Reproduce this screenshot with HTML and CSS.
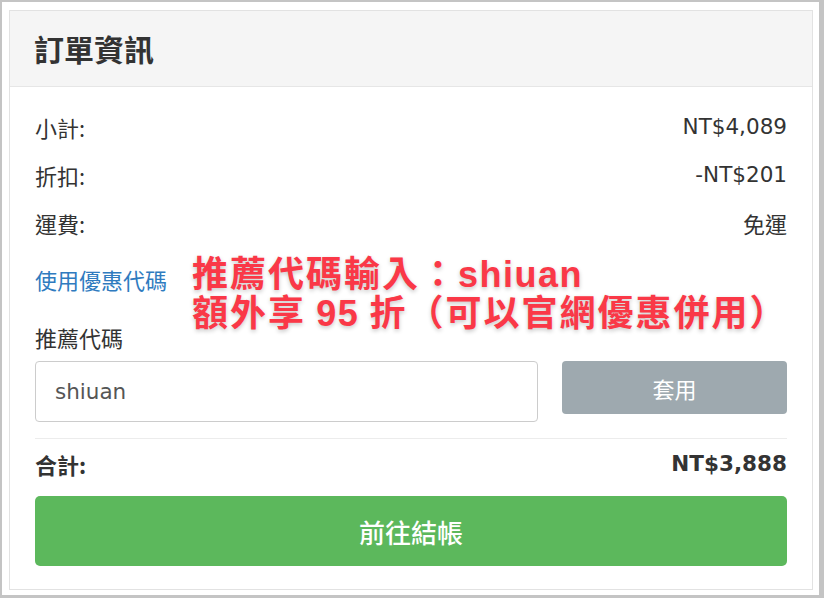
FILE: index.html
```html
<!DOCTYPE html>
<html lang="zh-Hant">
<head>
<meta charset="utf-8">
<title>訂單資訊</title>
<link rel="stylesheet" href="styles.css">
</head>
<body>
<div class="frame">
  <div class="card">
    <div class="card-header">訂單資訊</div>
    <div class="card-body">
      <div class="row"><span>小計:</span><span class="num">NT$4,089</span></div>
      <div class="row"><span>折扣:</span><span class="num">-NT$201</span></div>
      <div class="row"><span>運費:</span><span>免運</span></div>
      <a class="coupon-link" href="#">使用優惠代碼</a>
      <div class="label">推薦代碼</div>
      <div class="code-group">
        <div class="code-input">shiuan</div>
        <button class="apply-btn" type="button">套用</button>
      </div>
      <div class="divider"></div>
      <div class="row total"><span>合計:</span><span class="num">NT$3,888</span></div>
      <button class="checkout-btn" type="button">前往結帳</button>
      <div class="promo">
        <div class="promo-line">推薦代碼輸入：<span class="latin">shiuan</span></div>
        <div class="promo-line">額外享 <span class="latin">95</span> 折（可以官網優惠併用）</div>
      </div>
    </div>
  </div>
</div>
</body>
</html>
```

FILE: styles.css
```css
html, body {
  margin: 0;
  padding: 0;
}
body {
  background: #c4c4c4;
  width: 824px;
  height: 598px;
  overflow: hidden;
  font-family: "DejaVu Sans", "Noto Sans CJK TC", sans-serif;
  color: #333;
}
.frame {
  margin: 2px 5px 3px 2px;
  height: 580px;
  padding: 8px 6px 5px 7px;
  background: #fff;
}
.card {
  border: 1px solid #e2e2e2;
  height: 578px;
  background: #fff;
}
.card-header {
  height: 75px;
  line-height: 74px;
  padding-left: 24px;
  background: #f5f5f5;
  border-bottom: 1px solid #e6e6e6;
  font-family: "Noto Sans CJK TC", sans-serif;
  font-size: 30px;
  font-weight: 700;
  color: #333;
}
.card-body {
  position: relative;
  padding: 23px 25px 0 25px;
  display: flex;
  flex-direction: column;
  font-size: 22px;
}
.row {
  display: flex;
  justify-content: space-between;
  align-items: center;
  height: 34px;
  line-height: 34px;
  margin-bottom: 14px;
}
.row span {
  font-family: "Noto Sans CJK TC", sans-serif;
}
.row .num {
  font-family: "DejaVu Sans", sans-serif;
  font-size: 21.5px;
}
.coupon-link {
  font-family: "Noto Sans CJK TC", sans-serif;
  color: #2f7bbf;
  text-decoration: none;
  line-height: 34px;
  margin-top: 8px;
  align-self: flex-start;
}
.label {
  font-family: "Noto Sans CJK TC", sans-serif;
  line-height: 34px;
  margin-top: 24px;
}
.code-group {
  display: flex;
  align-items: flex-start;
  gap: 24px;
  margin-top: 7px;
}
.code-input {
  flex: 0 0 503px;
  box-sizing: border-box;
  height: 61px;
  line-height: 59px;
  border: 1px solid #cccccc;
  border-radius: 4px;
  padding-left: 19px;
  color: #555;
  font-family: "DejaVu Sans", sans-serif;
  font-size: 21.5px;
}
.apply-btn {
  flex: 1;
  height: 53px;
  border: none;
  border-radius: 4px;
  background: #9ea9af;
  color: #fff;
  font-family: "Noto Sans CJK TC", sans-serif;
  font-size: 22px;
  padding: 0;
}
.divider {
  height: 1px;
  background: #ececec;
  margin-top: 16px;
}
.row.total {
  margin-top: 8px;
  margin-bottom: 15px;
  font-weight: 700;
}
.row.total .num {
  font-weight: 700;
}
.checkout-btn {
  height: 70px;
  border: none;
  border-radius: 5px;
  background: #5cb85c;
  color: #fff;
  font-family: "Noto Sans CJK TC", sans-serif;
  font-size: 26px;
  font-weight: 500;
  padding: 0;
}
.promo {
  position: absolute;
  left: 182px;
  top: 165px;
  display: flex;
  flex-direction: column;
  font-family: "Noto Sans CJK TC", sans-serif;
  font-size: 36px;
  font-weight: 700;
  letter-spacing: 2px;
  color: #fa3847;
  text-shadow: 0 2px 4px rgba(0, 0, 0, 0.22);
  white-space: nowrap;
}
.promo-line {
  height: 39px;
  line-height: 39px;
  overflow: visible;
}
.promo .latin {
  font-family: "Liberation Sans", sans-serif;
  font-weight: 700;
  letter-spacing: 1.5px;
}
```
